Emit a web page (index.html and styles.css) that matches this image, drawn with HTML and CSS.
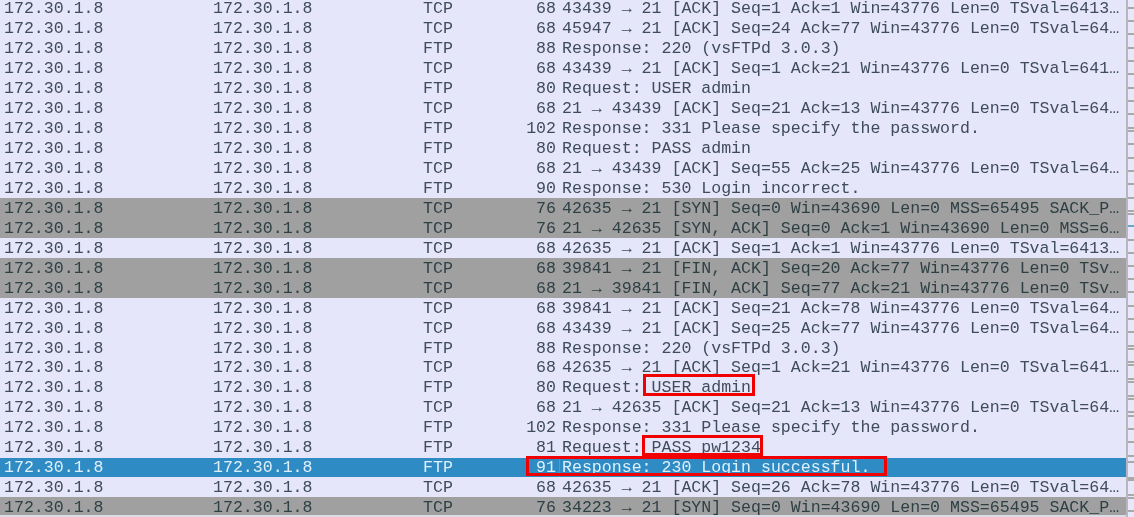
FILE: index.html
```html
<!DOCTYPE html>
<html>
<head>
<meta charset="utf-8">
<title>Packet list</title>
<link rel="stylesheet" href="styles.css">
</head>
<body>
<div class="view">
<div class="list">
<div class="row"><span class="src">172.30.1.8</span><span class="dst">172.30.1.8</span><span class="proto">TCP</span><span class="len">68</span><span class="info">43439 → 21 [ACK] Seq=1 Ack=1 Win=43776 Len=0 TSval=6413…</span></div>
<div class="row"><span class="src">172.30.1.8</span><span class="dst">172.30.1.8</span><span class="proto">TCP</span><span class="len">68</span><span class="info">45947 → 21 [ACK] Seq=24 Ack=77 Win=43776 Len=0 TSval=64…</span></div>
<div class="row"><span class="src">172.30.1.8</span><span class="dst">172.30.1.8</span><span class="proto">FTP</span><span class="len">88</span><span class="info">Response: 220 (vsFTPd 3.0.3)</span></div>
<div class="row"><span class="src">172.30.1.8</span><span class="dst">172.30.1.8</span><span class="proto">TCP</span><span class="len">68</span><span class="info">43439 → 21 [ACK] Seq=1 Ack=21 Win=43776 Len=0 TSval=641…</span></div>
<div class="row"><span class="src">172.30.1.8</span><span class="dst">172.30.1.8</span><span class="proto">FTP</span><span class="len">80</span><span class="info">Request: USER admin</span></div>
<div class="row"><span class="src">172.30.1.8</span><span class="dst">172.30.1.8</span><span class="proto">TCP</span><span class="len">68</span><span class="info">21 → 43439 [ACK] Seq=21 Ack=13 Win=43776 Len=0 TSval=64…</span></div>
<div class="row"><span class="src">172.30.1.8</span><span class="dst">172.30.1.8</span><span class="proto">FTP</span><span class="len">102</span><span class="info">Response: 331 Please specify the password.</span></div>
<div class="row"><span class="src">172.30.1.8</span><span class="dst">172.30.1.8</span><span class="proto">FTP</span><span class="len">80</span><span class="info">Request: PASS admin</span></div>
<div class="row"><span class="src">172.30.1.8</span><span class="dst">172.30.1.8</span><span class="proto">TCP</span><span class="len">68</span><span class="info">21 → 43439 [ACK] Seq=55 Ack=25 Win=43776 Len=0 TSval=64…</span></div>
<div class="row"><span class="src">172.30.1.8</span><span class="dst">172.30.1.8</span><span class="proto">FTP</span><span class="len">90</span><span class="info">Response: 530 Login incorrect.</span></div>
<div class="row gray"><span class="src">172.30.1.8</span><span class="dst">172.30.1.8</span><span class="proto">TCP</span><span class="len">76</span><span class="info">42635 → 21 [SYN] Seq=0 Win=43690 Len=0 MSS=65495 SACK_P…</span></div>
<div class="row gray"><span class="src">172.30.1.8</span><span class="dst">172.30.1.8</span><span class="proto">TCP</span><span class="len">76</span><span class="info">21 → 42635 [SYN, ACK] Seq=0 Ack=1 Win=43690 Len=0 MSS=6…</span></div>
<div class="row"><span class="src">172.30.1.8</span><span class="dst">172.30.1.8</span><span class="proto">TCP</span><span class="len">68</span><span class="info">42635 → 21 [ACK] Seq=1 Ack=1 Win=43776 Len=0 TSval=6413…</span></div>
<div class="row gray"><span class="src">172.30.1.8</span><span class="dst">172.30.1.8</span><span class="proto">TCP</span><span class="len">68</span><span class="info">39841 → 21 [FIN, ACK] Seq=20 Ack=77 Win=43776 Len=0 TSv…</span></div>
<div class="row gray"><span class="src">172.30.1.8</span><span class="dst">172.30.1.8</span><span class="proto">TCP</span><span class="len">68</span><span class="info">21 → 39841 [FIN, ACK] Seq=77 Ack=21 Win=43776 Len=0 TSv…</span></div>
<div class="row"><span class="src">172.30.1.8</span><span class="dst">172.30.1.8</span><span class="proto">TCP</span><span class="len">68</span><span class="info">39841 → 21 [ACK] Seq=21 Ack=78 Win=43776 Len=0 TSval=64…</span></div>
<div class="row"><span class="src">172.30.1.8</span><span class="dst">172.30.1.8</span><span class="proto">TCP</span><span class="len">68</span><span class="info">43439 → 21 [ACK] Seq=25 Ack=77 Win=43776 Len=0 TSval=64…</span></div>
<div class="row"><span class="src">172.30.1.8</span><span class="dst">172.30.1.8</span><span class="proto">FTP</span><span class="len">88</span><span class="info">Response: 220 (vsFTPd 3.0.3)</span></div>
<div class="row"><span class="src">172.30.1.8</span><span class="dst">172.30.1.8</span><span class="proto">TCP</span><span class="len">68</span><span class="info">42635 → 21 [ACK] Seq=1 Ack=21 Win=43776 Len=0 TSval=641…</span></div>
<div class="row"><span class="src">172.30.1.8</span><span class="dst">172.30.1.8</span><span class="proto">FTP</span><span class="len">80</span><span class="info">Request: USER admin</span></div>
<div class="row"><span class="src">172.30.1.8</span><span class="dst">172.30.1.8</span><span class="proto">TCP</span><span class="len">68</span><span class="info">21 → 42635 [ACK] Seq=21 Ack=13 Win=43776 Len=0 TSval=64…</span></div>
<div class="row"><span class="src">172.30.1.8</span><span class="dst">172.30.1.8</span><span class="proto">FTP</span><span class="len">102</span><span class="info">Response: 331 Please specify the password.</span></div>
<div class="row"><span class="src">172.30.1.8</span><span class="dst">172.30.1.8</span><span class="proto">FTP</span><span class="len">81</span><span class="info">Request: PASS pw1234</span></div>
<div class="row selected"><span class="src">172.30.1.8</span><span class="dst">172.30.1.8</span><span class="proto">FTP</span><span class="len">91</span><span class="info">Response: 230 Login successful.</span></div>
<div class="row"><span class="src">172.30.1.8</span><span class="dst">172.30.1.8</span><span class="proto">TCP</span><span class="len">68</span><span class="info">42635 → 21 [ACK] Seq=26 Ack=78 Win=43776 Len=0 TSval=64…</span></div>
<div class="row gray last"><span class="src">172.30.1.8</span><span class="dst">172.30.1.8</span><span class="proto">TCP</span><span class="len">76</span><span class="info">34223 → 21 [SYN] Seq=0 Win=43690 Len=0 MSS=65495 SACK_P…</span></div>
</div>
<div class="scroll">
<i class="tick" style="top:7px"></i><i class="tick" style="top:20px"></i><i class="tick" style="top:33px"></i><i class="tick" style="top:47px"></i><i class="tick" style="top:60px"></i><i class="tick" style="top:73px"></i><i class="tick" style="top:87px"></i><i class="tick" style="top:100px"></i><i class="tick" style="top:113px"></i><i class="tick" style="top:127px"></i><i class="tick" style="top:130px"></i><i class="tick" style="top:143px"></i><i class="tick" style="top:157px"></i><i class="tick" style="top:170px"></i><i class="tick" style="top:183px"></i><i class="tick" style="top:197px"></i><i class="tick" style="top:210px"></i><i class="tick" style="top:213px"></i><i class="tick blue" style="top:225px"></i><i class="tick" style="top:239px"></i><i class="tick" style="top:252px"></i><i class="tick" style="top:265px"></i><i class="tick" style="top:278px"></i><i class="tick" style="top:291px"></i><i class="tick" style="top:305px"></i><i class="tick" style="top:318px"></i><i class="tick" style="top:331px"></i><i class="tick" style="top:345px"></i><i class="tick" style="top:348px"></i><i class="tick" style="top:361px"></i><i class="tick" style="top:364px"></i><i class="tick" style="top:378px"></i><i class="tick" style="top:381px"></i><i class="tick" style="top:395px"></i><i class="tick" style="top:398px"></i><i class="tick" style="top:411px"></i><i class="tick" style="top:415px"></i><i class="tick" style="top:428px"></i><i class="tick" style="top:441px"></i><i class="tick" style="top:455px"></i><i class="tick" style="top:461px"></i><i class="tick thick" style="top:477px"></i><i class="tick" style="top:494px"></i><i class="tick" style="top:497px"></i><i class="tick" style="top:510px"></i>
</div>
</div>
<div class="mark mark-user"></div>
<div class="mark mark-pass"></div>
<div class="mark mark-resp"></div>
</body>
</html>
```
FILE: styles.css
```css
html, body {
  margin: 0;
  padding: 0;
  width: 1134px;
  height: 517px;
  overflow: hidden;
  background: #e6e6fb;
}
.view {
  display: flex;
  height: 517px;
  overflow: hidden;
  background: #dcdce6;
}
.list {
  width: 1127px;
  flex: none;
  align-self: flex-start;
  margin-top: -1.4px;
  font-family: "Liberation Mono", monospace;
  font-size: 16.58px;
  color: #3f4c5a;
  filter: blur(0.4px);
}
.row {
  display: flex;
  box-sizing: border-box;
  height: 19.96px;
  padding-top: 1.7px;
  line-height: 17px;
  background: #e6e6fb;
  white-space: pre;
}
.row.last { height: 17.4px; }
.row.gray {
  background: #a0a0a0;
  color: #2f4045;
}
.row.selected {
  background: #2f8bc4;
  color: #dff0fa;
}
.src { width: 209px; flex: none; padding-left: 4px; box-sizing: border-box; }
.dst { width: 210px; flex: none; padding-left: 4px; box-sizing: border-box; }
.proto { width: 100px; flex: none; padding-left: 4px; box-sizing: border-box; }
.len { width: 41px; flex: none; padding-right: 4px; box-sizing: border-box; text-align: right; }
.info { padding-left: 2px; }
.selected .info { box-shadow: -1px 0 0 rgba(255, 255, 255, 0.14); }
.scroll {
  position: relative;
  flex: 1;
  background: #e8e8fa;
  border-left: 2px solid #b6b6c2;
  margin-left: -1px;
}
.tick {
  position: absolute;
  left: 0;
  right: 0;
  height: 2px;
  background: #a9a9a9;
}
.tick.blue { background: #6fa3c4; }
.tick.thick { height: 4px; }
.mark {
  position: absolute;
  border: 3px solid #f00000;
  box-sizing: border-box;
}
.mark-user { left: 643px; top: 374px; width: 112px; height: 22px; }
.mark-pass { left: 642px; top: 435px; width: 121px; height: 21px; }
.mark-resp { left: 526px; top: 456px; width: 361px; height: 20px; }
```
